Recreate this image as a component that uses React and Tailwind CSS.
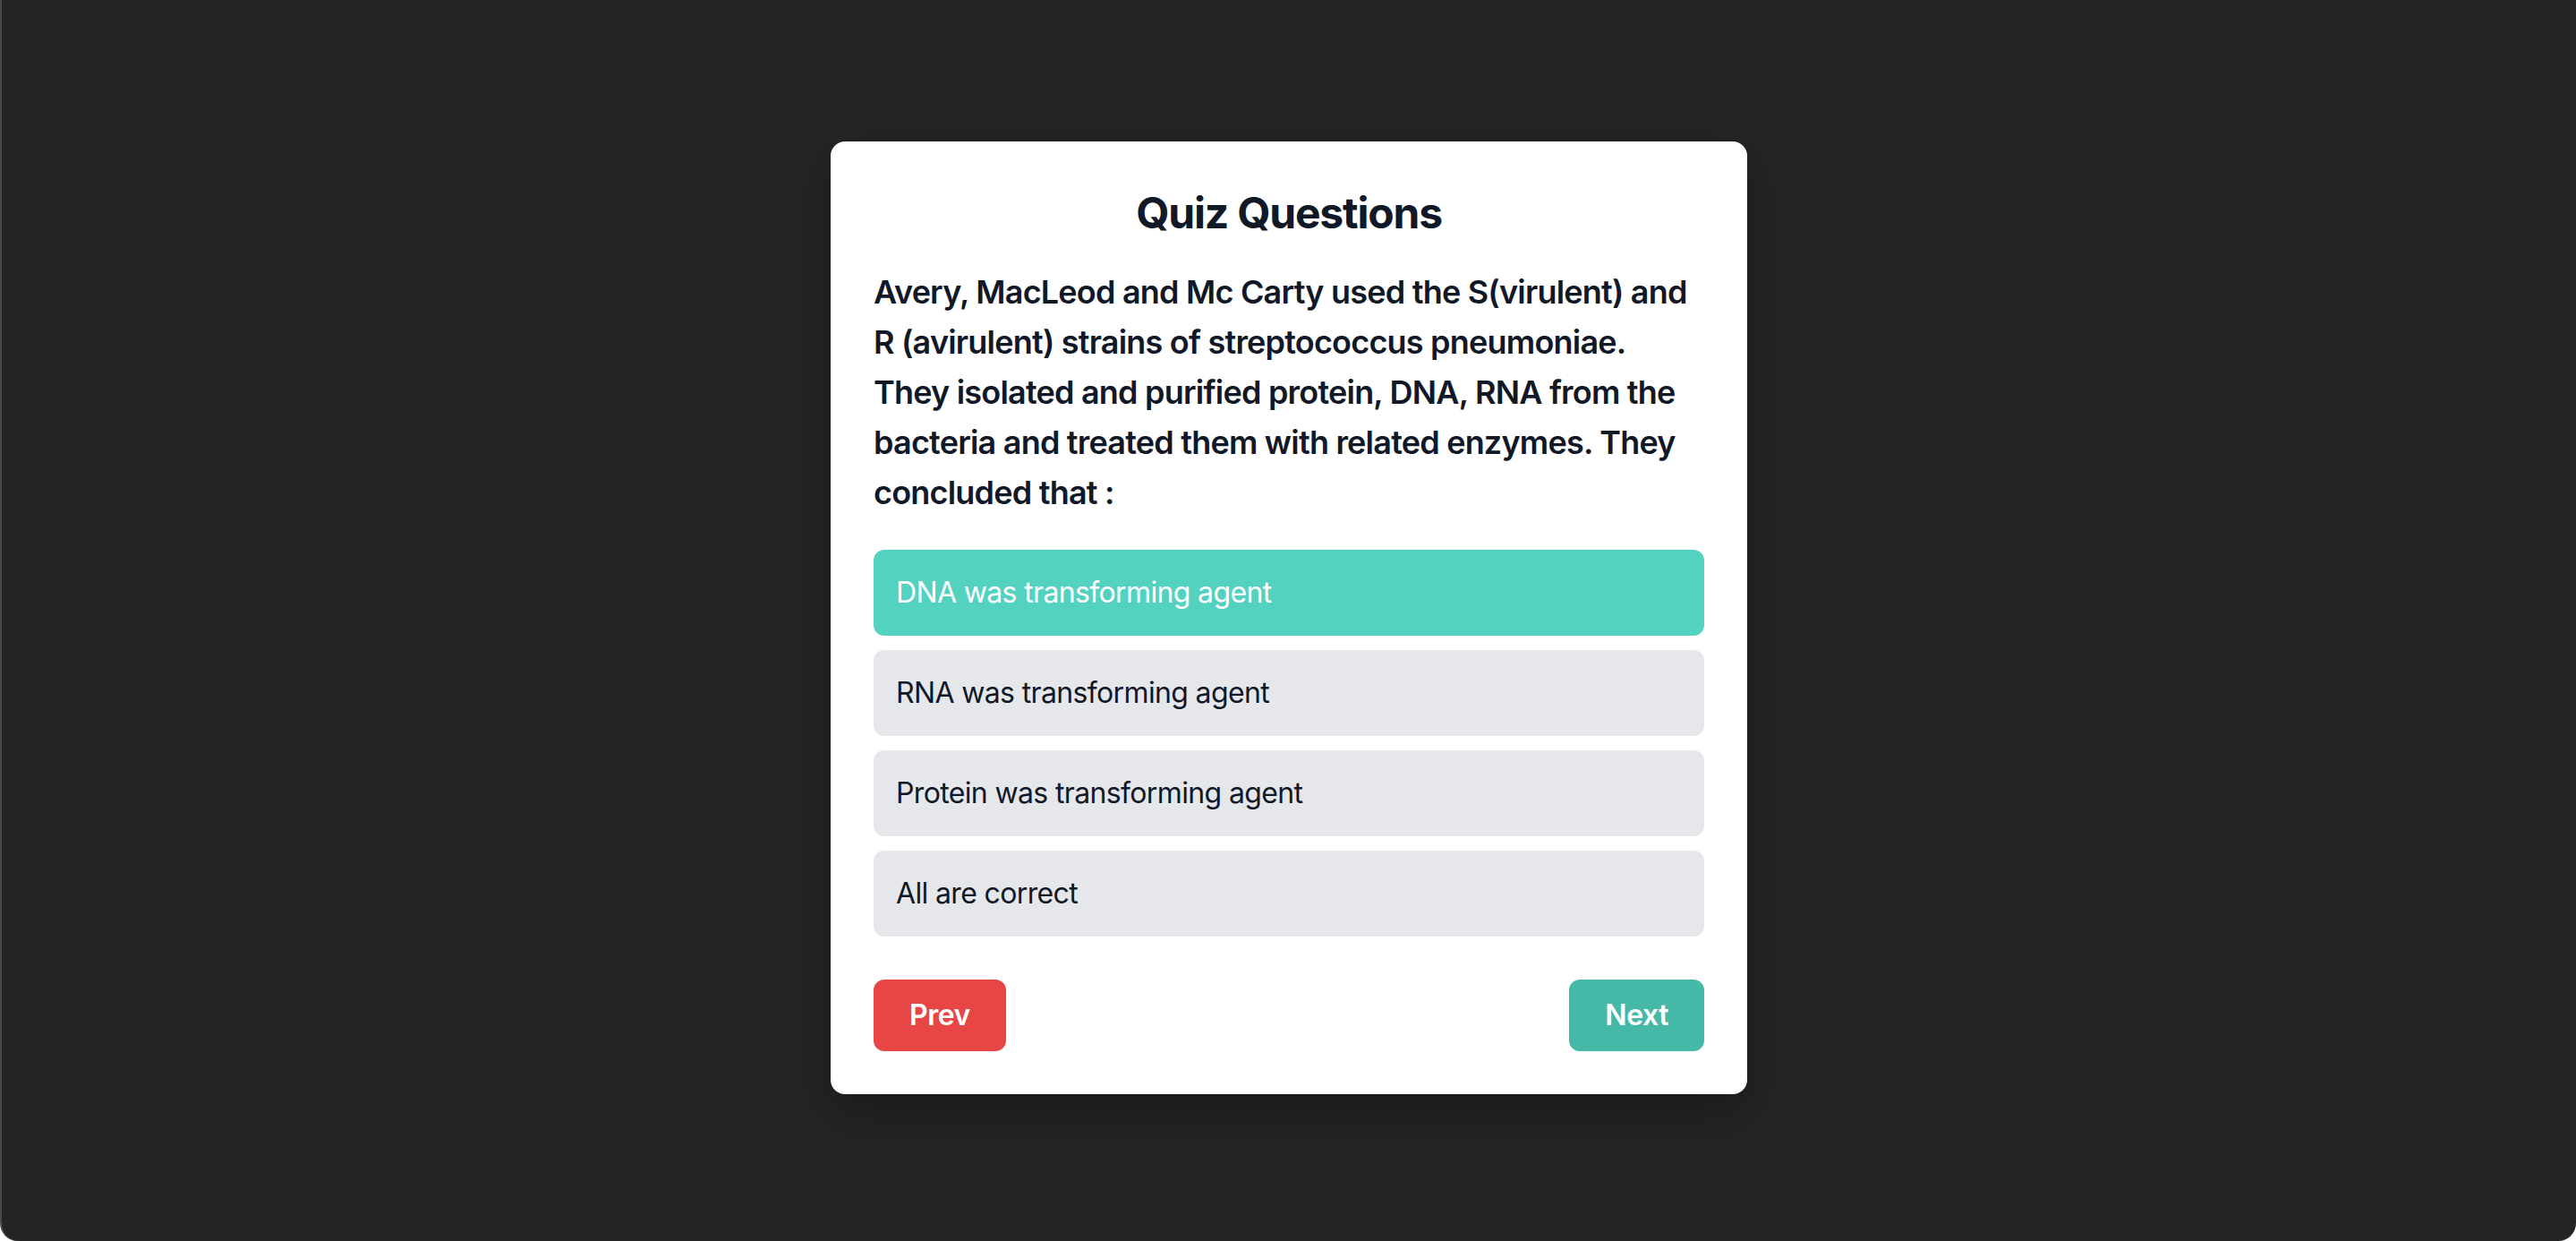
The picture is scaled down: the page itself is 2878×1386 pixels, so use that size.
export default function App() {
  const options = [
    "DNA was transforming agent",
    "RNA was transforming agent",
    "Protein was transforming agent",
    "All are correct",
  ];
  const selected = 0;
  return (
    <div
      className="min-h-screen w-full bg-[#242424] border-l-2 border-[#4a4a4a] rounded-bl-[20px] rounded-br-[20px] flex items-center justify-center"
      style={{ fontFamily: "Inter, 'Noto Sans', sans-serif" }}
    >
      <div className="w-[1024px] bg-white rounded-[16px] p-[48px] shadow-[0_20px_50px_rgba(0,0,0,0.25)] mt-[-6px]">
        <h1 className="text-center text-[48px] leading-[64px] font-bold tracking-[-0.025em] text-[#111827] mb-[28px]">
          Quiz Questions
        </h1>
        <p className="text-[36px] leading-[56px] font-semibold tracking-[-0.022em] text-[#111827] mb-[36px]">
          Avery, MacLeod and Mc Carty used the S(virulent) and R (avirulent) strains of streptococcus pneumoniae. They isolated and purified protein, DNA, RNA from the bacteria and treated them with related enzymes. They concluded that :
        </p>
        <div className="flex flex-col gap-[16px]">
          {options.map((o, i) => (
            <div
              key={o}
              className={
                i === selected
                  ? "rounded-[12px] px-[25px] py-[24px] text-[32px] leading-[48px] tracking-[-0.02em] bg-[#53d2c0] text-white"
                  : "rounded-[12px] px-[25px] py-[24px] text-[32px] leading-[48px] tracking-[-0.02em] bg-[#e5e7eb] text-[#111827]"
              }
            >
              {o}
            </div>
          ))}
        </div>
        <div className="flex justify-between mt-[48px]">
          <button className="bg-[#e84545] text-white font-semibold text-[32px] leading-[48px] tracking-[-0.015em] px-[40px] py-[16px] rounded-[12px]">
            Prev
          </button>
          <button className="bg-[#45b8a7] text-white font-semibold text-[32px] leading-[48px] tracking-[-0.015em] px-[40px] py-[16px] rounded-[12px]">
            Next
          </button>
        </div>
      </div>
    </div>
  );
}
